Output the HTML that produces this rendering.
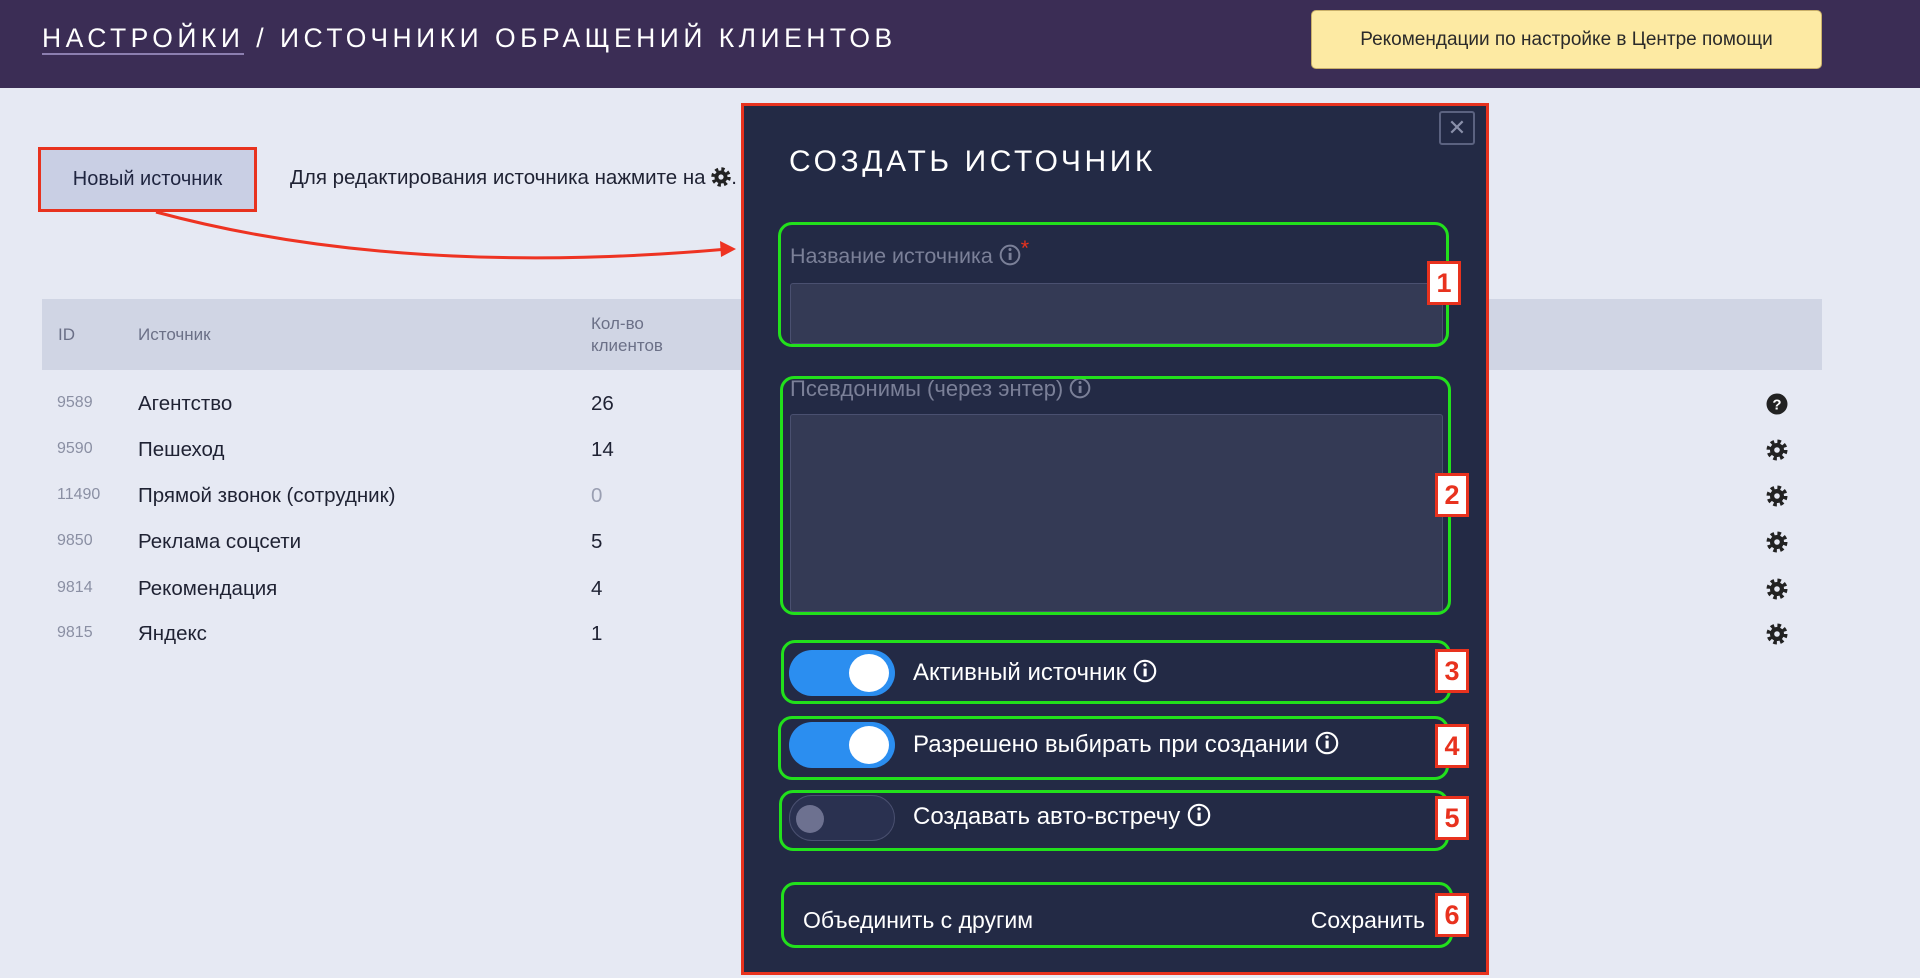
<!DOCTYPE html>
<html><head><meta charset="utf-8"><style>
*{margin:0;padding:0;box-sizing:border-box}
body{width:1920px;height:978px;background:#e6e9f3;font-family:"Liberation Sans","Noto Sans CJK SC",sans-serif;position:relative;overflow:hidden}
.a{position:absolute;white-space:nowrap}
.hdr{left:0;top:0;width:1920px;height:88px;background:#3b2d55}
.green{position:absolute;border:3px solid #22e01c;border-radius:14px}
.num{position:absolute;width:34px;height:44px;background:#fff;border:3px solid #e8321e;color:#e8321e;font-weight:bold;font-size:27px;text-align:center;line-height:38px}
.tog{position:absolute;width:106px;height:46px;border-radius:23px;background:#2b8ef0}
.tog .k{position:absolute;right:6px;top:4px;width:40px;height:38px;border-radius:50%;background:#fff}
.lbl{position:absolute;color:#fff;font-size:24px;white-space:nowrap}
.row{position:absolute;left:0;width:1920px;height:46px}
.row .id{position:absolute;left:57px;top:13px;font-size:16px;color:#8a8fa3}
.row .nm{position:absolute;left:138px;top:11px;font-size:20.5px;color:#1f2233}
.row .ct{position:absolute;left:591px;top:11px;font-size:20.5px;color:#1f2233}
.row svg{position:absolute;left:1766px;top:12px}
</style></head><body>
<div class="a hdr"></div>
<div class="a" style="left:42px;top:23px;font-size:26.5px;color:#fff;letter-spacing:4.5px"><span style="border-bottom:2px solid #8c7fb0">НАСТРОЙКИ</span> / ИСТОЧНИКИ ОБРАЩЕНИЙ КЛИЕНТОВ</div>
<div class="a" style="left:1311px;top:10px;width:511px;height:59px;background:#fdeaa3;border:1px solid #c9b06a;border-radius:5px;font-size:19px;color:#2a2a2a;text-align:center;line-height:57px">Рекомендации по настройке в Центре помощи</div>

<div class="a" style="left:38px;top:147px;width:219px;height:65px;background:#c9cfe4;border:3px solid #e8321e;font-size:20px;color:#1f2540;text-align:center;line-height:58px">Новый источник</div>
<div class="a" style="left:290px;top:166px;font-size:20.5px;color:#1f2233">Для редактирования источника нажмите на <svg width="20" height="20" viewBox="-10 -10 20 20" style="vertical-align:-3px"><circle r="6.5" fill="#222"/><circle r="8" fill="none" stroke="#222" stroke-width="3.5" stroke-dasharray="3.2 3.1"/><circle r="2.6" fill="#e6e9f3"/></svg>.</div>

<svg class="a" style="left:0;top:0" width="760" height="300"><path d="M156 212 Q 400 278 728 249" fill="none" stroke="#ee3322" stroke-width="3"/><path d="M736 249 L720 241 L721 257 Z" fill="#ee3322"/></svg>

<div class="a" style="left:42px;top:299px;width:1780px;height:71px;background:#d0d5e4"></div>
<div class="a" style="left:58px;top:325px;font-size:17px;color:#6b7087">ID</div>
<div class="a" style="left:138px;top:325px;font-size:17px;color:#6b7087">Источник</div>
<div class="a" style="left:591px;top:313px;font-size:17px;color:#6b7087;line-height:22px">Кол-во<br>клиентов</div>

<div class="row" style="top:381px"><span class="id">9589</span><span class="nm">Агентство</span><span class="ct">26</span><svg width="22" height="22" viewBox="-11 -11 22 22"><circle r="10.5" fill="#222"/><text x="0" y="5.5" font-size="15" font-weight="bold" fill="#fff" text-anchor="middle" font-family="Liberation Sans">?</text></svg></div>
<div class="row" style="top:427px"><span class="id">9590</span><span class="nm">Пешеход</span><span class="ct">14</span><svg width="22" height="22" viewBox="-11 -11 22 22"><circle r="7" fill="#222"/><circle r="8.5" fill="none" stroke="#222" stroke-width="4" stroke-dasharray="3.5 3.2"/><circle r="2.8" fill="#e6e9f3"/></svg></div>
<div class="row" style="top:473px"><span class="id">11490</span><span class="nm">Прямой звонок (сотрудник)</span><span class="ct" style="color:#9a9fb2">0</span><svg width="22" height="22" viewBox="-11 -11 22 22"><circle r="7" fill="#222"/><circle r="8.5" fill="none" stroke="#222" stroke-width="4" stroke-dasharray="3.5 3.2"/><circle r="2.8" fill="#e6e9f3"/></svg></div>
<div class="row" style="top:519px"><span class="id">9850</span><span class="nm">Реклама соцсети</span><span class="ct">5</span><svg width="22" height="22" viewBox="-11 -11 22 22"><circle r="7" fill="#222"/><circle r="8.5" fill="none" stroke="#222" stroke-width="4" stroke-dasharray="3.5 3.2"/><circle r="2.8" fill="#e6e9f3"/></svg></div>
<div class="row" style="top:566px"><span class="id">9814</span><span class="nm">Рекомендация</span><span class="ct">4</span><svg width="22" height="22" viewBox="-11 -11 22 22"><circle r="7" fill="#222"/><circle r="8.5" fill="none" stroke="#222" stroke-width="4" stroke-dasharray="3.5 3.2"/><circle r="2.8" fill="#e6e9f3"/></svg></div>
<div class="row" style="top:611px"><span class="id">9815</span><span class="nm">Яндекс</span><span class="ct">1</span><svg width="22" height="22" viewBox="-11 -11 22 22"><circle r="7" fill="#222"/><circle r="8.5" fill="none" stroke="#222" stroke-width="4" stroke-dasharray="3.5 3.2"/><circle r="2.8" fill="#e6e9f3"/></svg></div>

<!-- modal -->
<div class="a" style="left:741px;top:103px;width:748px;height:872px;background:#232a45;border:3px solid #e8321e"></div>
<div class="a" style="left:1439px;top:111px;width:36px;height:34px;border:2px solid #5b6280;border-radius:3px;color:#8a90aa;font-size:22px;text-align:center;line-height:30px">✕</div>
<div class="a" style="left:789px;top:145px;font-size:30px;color:#fff;letter-spacing:3.6px">СОЗДАТЬ ИСТОЧНИК</div>

<div class="a" style="left:790px;top:283px;width:653px;height:61px;background:#343a55;border:1px solid #4a5070;border-radius:3px"></div>
<div class="a" style="left:790px;top:244px;font-size:21.5px;color:#7b8098">Название источника <svg width="22" height="22" viewBox="-10 -10 20 20" style="vertical-align:-3px"><circle r="8.5" fill="none" stroke="#7b8098" stroke-width="1.8"/><rect x="-1.2" y="-2" width="2.6" height="6.5" fill="#7b8098"/><circle cy="-5" r="1.4" fill="#7b8098"/></svg><span style="color:#e8321e;position:relative;top:-8px">*</span></div>
<div class="green" style="left:778px;top:222px;width:671px;height:125px"></div>
<div class="num" style="left:1427px;top:261px">1</div>

<div class="a" style="left:790px;top:414px;width:653px;height:198px;background:#343a55;border:1px solid #4a5070;border-radius:3px"></div>
<div class="a" style="left:790px;top:376px;font-size:22px;color:#7b8098">Псевдонимы (через энтер) <svg width="22" height="22" viewBox="-10 -10 20 20" style="vertical-align:-3px"><circle r="8.5" fill="none" stroke="#7b8098" stroke-width="1.8"/><rect x="-1.2" y="-2" width="2.6" height="6.5" fill="#7b8098"/><circle cy="-5" r="1.4" fill="#7b8098"/></svg></div>
<div class="green" style="left:780px;top:376px;width:671px;height:239px"></div>
<div class="num" style="left:1435px;top:473px">2</div>

<div class="tog" style="left:789px;top:650px"><div class="k"></div></div>
<div class="lbl" style="left:913px;top:659px">Активный источник <svg width="24" height="24" viewBox="-10 -10 20 20" style="vertical-align:-3px"><circle r="8.5" fill="none" stroke="#fff" stroke-width="1.8"/><rect x="-1.2" y="-2" width="2.6" height="6.5" fill="#fff"/><circle cy="-5" r="1.4" fill="#fff"/></svg></div>
<div class="green" style="left:781px;top:640px;width:670px;height:64px"></div>
<div class="num" style="left:1435px;top:649px">3</div>

<div class="tog" style="left:789px;top:722px"><div class="k"></div></div>
<div class="lbl" style="left:913px;top:731px">Разрешено выбирать при создании <svg width="24" height="24" viewBox="-10 -10 20 20" style="vertical-align:-3px"><circle r="8.5" fill="none" stroke="#fff" stroke-width="1.8"/><rect x="-1.2" y="-2" width="2.6" height="6.5" fill="#fff"/><circle cy="-5" r="1.4" fill="#fff"/></svg></div>
<div class="green" style="left:778px;top:716px;width:671px;height:64px"></div>
<div class="num" style="left:1435px;top:724px">4</div>

<div class="tog" style="left:789px;top:795px;background:#2a3150;border:1px solid #4a5070"><div class="k" style="left:6px;top:9px;width:28px;height:28px;background:#6d7190"></div></div>
<div class="lbl" style="left:913px;top:803px">Создавать авто-встречу <svg width="24" height="24" viewBox="-10 -10 20 20" style="vertical-align:-3px"><circle r="8.5" fill="none" stroke="#fff" stroke-width="1.8"/><rect x="-1.2" y="-2" width="2.6" height="6.5" fill="#fff"/><circle cy="-5" r="1.4" fill="#fff"/></svg></div>
<div class="green" style="left:779px;top:790px;width:670px;height:61px"></div>
<div class="num" style="left:1435px;top:796px">5</div>

<div class="lbl" style="left:803px;top:907px;font-size:23px">Объединить с другим</div>
<div class="lbl" style="right:495px;top:907px;font-size:23px">Сохранить</div>
<div class="green" style="left:781px;top:882px;width:672px;height:66px"></div>
<div class="num" style="left:1435px;top:893px">6</div>
</body></html>
